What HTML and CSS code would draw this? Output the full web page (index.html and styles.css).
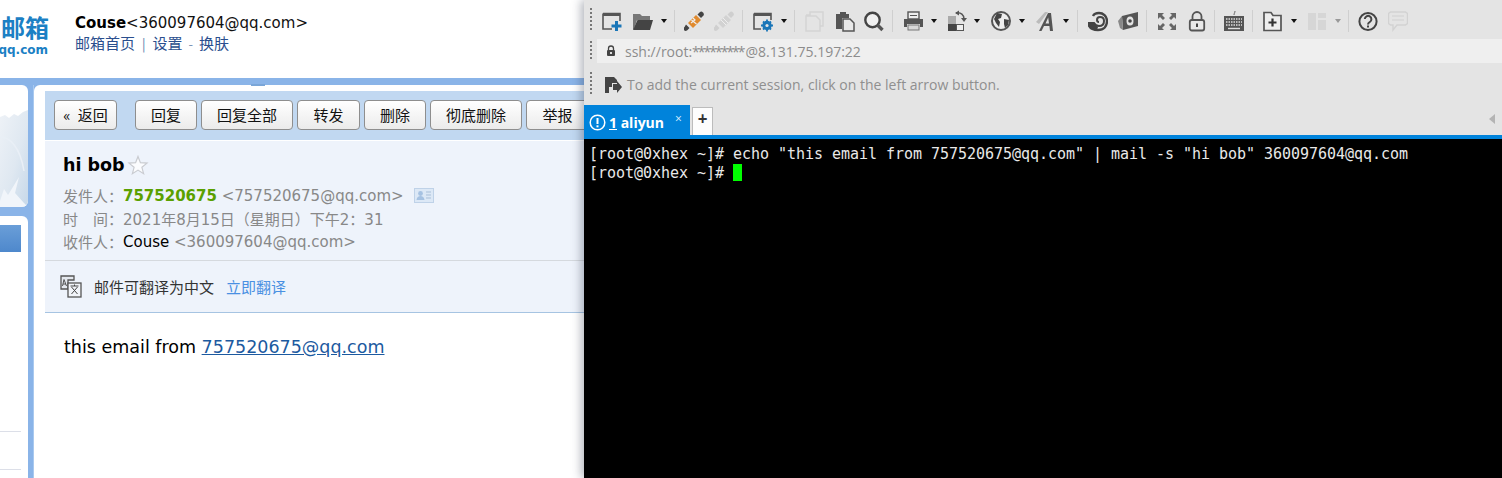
FILE: index.html
```html
<!DOCTYPE html>
<html lang="zh-CN">
<head>
<meta charset="utf-8">
<title>QQ邮箱 + Xshell</title>
<link rel="stylesheet" href="styles.css">
</head>
<body>
<div class="app">
  <section class="mail">
    <header class="mail-top">
      <div class="logo">
        <div class="logo-cn">邮箱</div>
        <div class="logo-en">qq.com</div>
      </div>
      <div class="user">
        <div class="user-name"><b>Couse</b>&lt;360097604@qq.com&gt;</div>
        <div class="user-links"><a>邮箱首页</a><span class="pipe">|</span><a>设置</a><span class="dash">-</span><a>换肤</a></div>
      </div>
    </header>
    <div class="mail-frame">
      <span class="notch"></span>
      <aside class="side">
        <div class="side-art">
          <svg width="28" height="122" viewBox="0 0 28 122">
            <defs>
              <linearGradient id="art" x1="0" y1="0" x2="1" y2="1"><stop offset="0" stop-color="#eef2f7"/><stop offset=".55" stop-color="#dfe8f1"/><stop offset="1" stop-color="#c6d8e9"/></linearGradient>
            </defs>
            <path d="M0 32 L5 30 L9 33 L14 29 L18 31 L23 27 L28 25 V122 H0Z" fill="url(#art)"/>
            <path d="M0 52 C10 52 20 62 24 86" fill="none" stroke="#e9eff6" stroke-width="1.500"/>
            <path d="M0 116 L4 104 L8 110 L19 92 L15 108 L24 118 L28 122 H0Z" fill="#f1f5fa"/>
          </svg>
        </div>
        <div class="side-list">
          <div class="side-sel"></div>
          <div class="side-rule side-rule-a"></div>
          <div class="side-rule side-rule-b"></div>
        </div>
      </aside>
      <div class="gutter"></div>
      <main class="read">
        <div class="btnbar">
          <button class="btn btn-back">« 返回</button>
          <span class="btn-sep"></span>
          <button class="btn btn-n">回复</button>
          <button class="btn btn-4">回复全部</button>
          <button class="btn btn-2">转发</button>
          <button class="btn btn-n">删除</button>
          <button class="btn btn-4">彻底删除</button>
          <button class="btn btn-2">举报</button>
        </div>
        <div class="head">
          <h1 class="subject">hi bob<svg class="star" width="22" height="22" viewBox="0 0 22 22"><path d="M11 2.500l2.400 6.200 6.600.4-5.100 4.200 1.700 6.400L11 16.100l-5.600 3.600 1.700-6.400L2 9.100l6.600-.4z" fill="#fbfcfe" stroke="#c9cbd0" stroke-width="1.200"/></svg></h1>
          <div class="meta"><span class="k">发件人：</span><b class="from">757520675</b> &lt;757520675@qq.com&gt;<svg class="card" width="20" height="15" viewBox="0 0 20 15"><rect x=".5" y=".5" width="19" height="14" fill="#dce8f6" stroke="#bfd2e8"/><circle cx="6.500" cy="5.500" r="2.400" fill="#a6c2e2"/><path d="M2.500 12c.4-3 2-4 4-4s3.600 1 4 4z" fill="#a6c2e2"/><path d="M12 4h5M12 7h5M12 10h5" stroke="#a9bfd8"/></svg></div>
          <div class="meta"><span class="k">时<i class="sp"></i>间：</span>2021年8月15日（星期日）下午2：31</div>
          <div class="meta"><span class="k">收件人：</span><span class="to">Couse</span> &lt;360097604@qq.com&gt;</div>
        </div>
        <div class="translate">
          <svg width="22" height="23" viewBox="0 0 22 23"><path d="M1 1h13v4H8v9H1z" fill="#e4e8ee" stroke="#555" stroke-width="1.300"/><rect x="8" y="8" width="13" height="14" fill="#f2f5fa" stroke="#555" stroke-width="1.300"/><path d="M4 4.500L2.500 11M4 4.500L6.500 11M3 9h3" stroke="#555" fill="none"/><path d="M10.500 11h8M14.500 9.500V11M11.500 12l6 7M17.500 12l-6 7" stroke="#444" fill="none"/></svg>
          <span class="tr-text">邮件可翻译为中文</span>
          <a class="tr-link">立即翻译</a>
        </div>
        <div class="body-text">this email from <a>757520675@qq.com</a></div>
      </main>
    </div>
  </section>

  <section class="term">
    <div class="tools">
      <span class="grip"></span>
      <svg class="ic" viewBox="0 0 20 22"><path d="M1 3.500h17V11M10 19H1V3.500" fill="none" stroke="#555" stroke-width="1.600"/><rect x="1" y="3" width="17" height="3" fill="#555"/><path d="M14.500 11v10M9.500 16h10" stroke="#1a76b8" stroke-width="3"/></svg>
      <svg class="ic m11" viewBox="0 0 20 22"><path d="M0 4h7l2 2h8v4H4L1 19H0z" fill="#777"/><path d="M4.500 10H20l-3 10H0z" fill="#444"/></svg>
      <i class="caret"></i><i class="sep"></i>
      <svg class="ic m9" viewBox="0 0 20 22"><path d="M13.500 4.500L16 2q1.500-1 3 .5t.5 3L17 8z" fill="#444"/><path d="M2 14.500l3.500 3.500-2.500 2.500q-2 1-3-.5t.5-3z" fill="#444"/><path d="M12 5l5 5-8 8-5-5z" fill="#e08a2e"/><path d="M7.500 10l5 4M9 8l2 2-4 3" stroke="#eee" stroke-width="1.200" fill="none"/></svg>
      <svg class="ic" viewBox="0 0 20 22"><path d="M13.500 4.500L16 2q1.500-1 3 .5t.5 3L17 8zM2 14.500l3.500 3.500-2.500 2.500q-2 1-3-.5t.5-3z" fill="#cfcfcf"/><path d="M12 5l5 5-8 8-5-5z" fill="#d2d2d2"/><path d="M9 8l5 5M7 10l5 5" stroke="#eee"/></svg>
      <i class="sep"></i>
      <svg class="ic" viewBox="0 0 20 22"><path d="M1 3.500h17V10M8 19H1V3.500" fill="none" stroke="#555" stroke-width="1.600"/><rect x="1" y="3" width="17" height="3" fill="#555"/><circle cx="14" cy="15.500" r="3.500" fill="none" stroke="#1a76b8" stroke-width="2.400"/><path d="M14 9.500v12M8 15.500h12M10 11.500l8 8M18 11.500l-8 8" stroke="#1a76b8" stroke-width="1.800"/><circle cx="14" cy="15.500" r="1.600" fill="#e4e4e4"/></svg>
      <i class="caret"></i><i class="sep"></i>
      <svg class="ic" viewBox="0 0 20 22"><path d="M1 5h4V2h8l5 0v14h-5" fill="none" stroke="#d4d4d4" stroke-width="1.500"/><path d="M1 6h10l4 4v11H1z" fill="#e4e4e4" stroke="#d4d4d4" stroke-width="1.500"/></svg>
      <svg class="ic" viewBox="0 0 20 22"><path d="M1 4h4V2h6v2h3v4H7v11H1z" fill="#555"/><path d="M8 9h7l4 4v8H8z" fill="#e9e9e9" stroke="#555" stroke-width="1.500"/></svg>
      <svg class="ic m9" viewBox="0 0 20 22"><circle cx="8.500" cy="10" r="7.200" fill="#f0f0f0" stroke="#444" stroke-width="2.400"/><path d="M13.500 15l5 5" stroke="#555" stroke-width="3.400"/></svg>
      <i class="sep"></i>
      <svg class="ic" viewBox="0 0 20 22"><rect x="5" y="2" width="11" height="7" fill="#eee" stroke="#555" stroke-width="1.400"/><path d="M1 9h19v8h-3v-3H4v3H1z" fill="#555"/><rect x="5" y="15" width="11" height="5" fill="#d8d8d8" stroke="#777"/><path d="M7 5.500h7" stroke="#555"/></svg>
      <i class="caret"></i>
      <svg class="ic m11" viewBox="0 0 20 22"><rect x="1" y="6" width="8" height="8" fill="#aaa"/><rect x="1" y="14" width="8" height="7" fill="#444"/><rect x="9.500" y="14.500" width="7" height="6" fill="#eee" stroke="#555"/><path d="M9 3c5-1 8 2 8 6" fill="none" stroke="#555" stroke-width="1.500"/><path d="M12 .5L8 3l4 2.500zM14 8h6l-3 4z" fill="#555"/></svg>
      <i class="caret m7"></i>
      <svg class="ic m12" viewBox="0 0 20 22"><circle cx="10" cy="11" r="9" fill="#eee" stroke="#555" stroke-width="2"/><path d="M6 3l5 1-1 4-3 1 2 3-1 5-3-4-2-4zM13 9l5 1-1 5-3 3-1-4z" fill="#444"/></svg>
      <i class="caret"></i>
      <svg class="ic m12" viewBox="0 0 20 22"><path d="M0 12L9 2h3L3 14z" fill="#bbb"/><path d="M3 21L12 3h3l2 18h-3l-.6-5H8l-2.500 5zM9.500 13.500h3.500l-.8-6z" fill="#555"/></svg>
      <i class="caret m7"></i><i class="sep m9"></i>
      <svg class="ic" viewBox="0 0 20 22"><path d="M0 13h6c1 2 3 3 5 3 3 0 5-2 5-5s-2-4-4-4-3 1-3 3 1 2 2 2" fill="none" stroke="#444" stroke-width="2"/><path d="M0 13c1 5 5 7 10 7 6 0 9-4 9-9 0-5-4-8-8-8-3 0-5 1-6 3" fill="none" stroke="#444" stroke-width="2.400"/><path d="M0 13h6l4 4-1 3q-7-1-9-7z" fill="#444"/></svg>
      <svg class="ic" viewBox="0 0 20 22"><path d="M4 6l16-4v14L5 20z" fill="#555"/><path d="M0 11l4-5 1 14-3-2z" fill="#888"/><ellipse cx="12" cy="11" rx="3.500" ry="4.500" fill="#e4e4e4"/><circle cx="12" cy="11" r="1.800" fill="#444"/></svg>
      <i class="sep"></i>
      <svg class="ic" viewBox="0 0 20 22"><path d="M1 3h6L5 5l3 3-2 2-3-3-2 2zM19 3h-6l2 2-3 3 2 2 3-3 2 2zM1 20h6l-2-2 3-3-2-2-3 3-2-2zM19 20h-6l2-2-3-3 2-2 3 3 2-2z" fill="#666"/></svg>
      <svg class="ic" viewBox="0 0 20 22"><path d="M5.500 10V6.500a4.500 4.500 0 0 1 9 0V10" fill="none" stroke="#555" stroke-width="1.800"/><rect x="2.800" y="10" width="14.400" height="10.500" rx="2" fill="#e9e9e9" stroke="#555" stroke-width="1.800"/><rect x="9" y="13.500" width="2" height="3.500" fill="#444"/></svg>
      <i class="sep m7"></i>
      <svg class="ic m9" viewBox="0 0 20 22"><path d="M10 5c0-2 1-2 1-4" fill="none" stroke="#666"/><rect x="0" y="6" width="20" height="15" fill="#555"/><path d="M2 9h16M2 12h16M2 15h16" stroke="#ddd" stroke-width="1.400" stroke-dasharray="1.500 1"/><path d="M4 18.500h12" stroke="#ddd" stroke-width="1.400"/></svg>
      <i class="sep"></i>
      <svg class="ic" viewBox="0 0 20 22"><path d="M1 2.500h7l2 3h8v15H1z" fill="#eee" stroke="#555" stroke-width="1.700"/><path d="M9.500 8.500v8M5.500 12.500h8" stroke="#333" stroke-width="2.200"/></svg>
      <i class="caret"></i>
      <svg class="ic m11" viewBox="0 0 20 22"><path d="M1 3h8v17H1zM11 3h8v5h-8zM11 10h8v10h-8z" fill="#d6d6d6"/></svg>
      <i class="caret caret-off"></i><i class="sep"></i>
      <svg class="ic m9" viewBox="0 0 20 22"><circle cx="10" cy="11.500" r="8.600" fill="none" stroke="#444" stroke-width="2"/><path d="M6.800 9a3.300 3.300 0 1 1 5 3c-1.200.8-1.800 1.300-1.800 2.500" fill="none" stroke="#444" stroke-width="2"/><rect x="9" y="15.500" width="2" height="2" fill="#444"/></svg>
      <svg class="ic" viewBox="0 0 20 22"><path d="M2.500 2h15l2 1.500v10L17.500 15H9l-4 5v-5H2.500L.5 13.500v-10z" fill="none" stroke="#d2d2d2" stroke-width="1.400"/><path d="M4 6h12M4 10h12" stroke="#d6d6d6" stroke-width="1.300"/></svg>
    </div>
    <div class="addr">
      <span class="grip grip-s"></span>
      <div class="addr-box">
        <svg width="10" height="12" viewBox="0 0 10 12"><path d="M2.500 5.500V3.500a2.500 2.500 0 0 1 5 0v2" fill="none" stroke="#444" stroke-width="1.300"/><rect x="1" y="5" width="8" height="6" rx="1" fill="#444"/><rect x="4" y="7" width="2" height="2" fill="#ddd"/></svg>
        <span>ssh://root:<span class="stars">*********</span>@8.131.75.197:22</span>
      </div>
    </div>
    <div class="hint">
      <span class="grip grip-m"></span>
      <svg width="18" height="18" viewBox="0 0 18 18"><path d="M1 1h9l3 3v3H8v4H5v6H1z" fill="#444"/><path d="M9 8h4V5l5 6-5 6v-3H9z" fill="#444"/></svg>
      <span>To add the current session, click on the left arrow button.</span>
    </div>
    <div class="tabs">
      <div class="tab">
        <svg width="17" height="17" viewBox="0 0 17 17"><circle cx="8.500" cy="8.500" r="7.300" fill="none" stroke="#fff" stroke-width="1.500"/><path d="M8.500 4v6" stroke="#fff" stroke-width="2"/><rect x="7.500" y="11.300" width="2" height="2" fill="#fff"/></svg>
        <span class="tab-name"><u>1</u> aliyun</span>
        <span class="tab-x">×</span>
      </div>
      <div class="tab-add">+</div>
      <i class="tab-scroll"></i>
    </div>
    <div class="blue-line"></div>
    <pre class="console">[root@0xhex ~]# echo "this email from 757520675@qq.com" | mail -s "hi bob" 360097604@qq.com
[root@0xhex ~]# <span class="cursor"> </span></pre>
  </section>
</div>
</body>
</html>
```
FILE: styles.css
```css
* { box-sizing: border-box; }
html, body { margin: 0; padding: 0; height: 478px; overflow: hidden; background: #fff; }
body { font-family: "DejaVu Sans", "Noto Sans CJK SC", sans-serif; }
.app { display: flex; height: 478px; }

/* mail */
.mail { width: 584px; flex: none; overflow: hidden; display: flex; flex-direction: column; font-size: 15px; }
.mail-top { height: 78px; flex: none; display: flex; background: #fff; }
.logo { width: 49px; margin-right: 26px; padding-top: 12px; display: flex; flex-direction: column; align-items: flex-end; color: #1b80c4; }
.logo-cn { font: 700 24px/30px "Noto Sans CJK SC", sans-serif; white-space: nowrap; }
.logo-en { font: 700 12px/15px "DejaVu Sans", sans-serif; white-space: nowrap; margin-top: 1px; margin-right: 1px; flex: none; }
.user { padding-top: 14px; }
.user-name { font-size: 15px; line-height: 19px; color: #111; white-space: nowrap; }
.user-name b { color: #000; }
.user-links { font-size: 15px; line-height: 20px; color: #2b4f8e; white-space: nowrap; font-family: "Noto Sans CJK SC", sans-serif; }
.pipe { margin: 0 7px; color: #5a7ca8; font-size: 13px; }
.dash { margin: 0 6px; color: #7d93b5; font-size: 13px; }

.mail-frame { flex: 1; position: relative; display: flex; padding-top: 7px; background: #8ab4e8; min-height: 0; }
.notch { position: absolute; left: 251px; top: 6px; width: 14px; height: 2px; background: #7aa6d8; }
.side { width: 28px; flex: none; display: flex; flex-direction: column; }
.side-art { height: 122px; background: #fff; border-radius: 0 6px 6px 0; overflow: hidden; flex: none; }
.side-art svg { display: block; }
.side-list { margin-top: 9px; flex: 1; background: #fff; border-radius: 0 6px 0 0; padding: 9px 7px 0 0; }
.side-sel { height: 27px; background: linear-gradient(#6a9ed8, #4e88cc); }
.side-rule { height: 1px; background: #dcdfe8; }
.side-rule-a { margin-top: 179px; }
.side-rule-b { margin-top: 37px; }
.gutter { width: 6px; flex: none; background: linear-gradient(90deg, #8ab4e8 0 5px, #a9c9ef 5px); }
.read { flex: 1; min-width: 0; background: #fff; border-radius: 6px 0 0 0; padding: 6px 0 0 11px; }

.btnbar { height: 50px; display: flex; align-items: flex-start; gap: 4px; padding: 9px 0 0 9px; background: #c1d8f1; border-bottom: 1px solid #fff; white-space: nowrap; }
.btn { height: 30px; flex: none; padding: 0; border: 1px solid #8e8e8e; border-radius: 4px; background: linear-gradient(#fff, #ebebeb); color: #111; font: 15px/28px "Noto Sans CJK SC", sans-serif; }
.btn-back { width: 63px; word-spacing: 4px; }
.btn-n { width: 62px; }
.btn-2 { width: 63px; }
.btn-4 { width: 92px; }
.btn-sep { width: 1px; height: 26px; margin: 2px 5px 0 5px; background: #e8f0fa; box-shadow: 1px 0 0 #a9c2dd; }

.head { height: 120px; padding: 12px 0 0 18px; background: #eef3fb; border-bottom: 1px solid #d5d9de; }
.subject { margin: 0 0 7px; height: 24px; display: flex; align-items: center; font: 700 17.500px/24px "DejaVu Sans", sans-serif; color: #000; }
.star { margin-left: 2px; }
.meta { display: flex; align-items: center; height: 23px; font-size: 15px; color: #888; white-space: pre; }
.k { width: 60px; font: 15px "Noto Sans CJK SC", sans-serif; color: #888; flex: none; }
.sp { display: inline-block; width: 15px; }
.from { color: #5aa000; }
.to { color: #000; }
.card { margin-left: 10px; }
.translate { height: 52px; display: flex; align-items: center; padding-left: 15px; background: #eef3fb; border-bottom: 1px solid #a6c4e2; font: 15px "Noto Sans CJK SC", sans-serif; }
.tr-text { margin-left: 12px; color: #333; }
.tr-link { margin-left: 12px; color: #4a90e2; }
.body-text { padding: 22px 0 0 19px; font-size: 17.500px; line-height: 24px; color: #000; }
.body-text a { color: #1c5aa0; text-decoration: underline; }

/* terminal */
.term { flex: 1; min-width: 0; position: relative; display: flex; flex-direction: column; background: #e4e4e4; box-shadow: -3px 0 9px rgba(40, 50, 70, .35); font-family: "Open Sans", sans-serif; }
.tools { height: 39px; flex: none; display: flex; align-items: center; padding: 2px 0 0 6px; }
.ic { width: 20px; height: 22px; flex: none; margin-left: 10px; filter: blur(.35px); }
.caret { width: 0; height: 0; flex: none; margin-left: 8px; border: 3.500px solid transparent; border-top: 4px solid #111; border-bottom: 0; margin-right: -1px; }
.caret-off { border-top-color: #999; }
.sep { width: 1px; height: 22px; flex: none; margin-left: 8px; background: #cfcfcf; }
.m7 { margin-left: 7px; }
.m9 { margin-left: 9px; }
.m11 { margin-left: 11px; }
.m12 { margin-left: 12px; }
.grip { width: 2px; height: 22px; flex: none; margin-top: -3px; background: repeating-linear-gradient(#777 0 2px, transparent 2px 4px); }
.addr { height: 24px; flex: none; display: flex; align-items: center; padding-left: 6px; }
.grip-s { height: 20px; margin-top: 0; }
.addr-box { margin-left: 5px; flex: 1; height: 24px; display: flex; align-items: center; gap: 9px; padding-left: 9px; background: #efefef; color: #8c8c8c; font-size: 14px; }
.stars { letter-spacing: -2px; margin-right: 2px; }
.hint { height: 42px; flex: none; display: flex; align-items: center; padding: 0 0 0 6px; color: #8f8f8f; font-size: 14px; }
.grip-m { height: 22px; }
.hint svg { margin: 2px 5px 0 12px; }
.tabs { height: 30px; flex: none; display: flex; align-items: flex-end; position: relative; }
.tab { width: 106px; height: 30px; display: flex; align-items: center; padding: 4px 0 0 5px; background: #0083db; color: #fff; font-size: 14px; font-weight: 700; }
.tab-name { margin-left: 3px; }
.tab-x { margin-left: 11px; font-size: 12px; font-weight: 400; margin-top: -7px; color: #dcefff; }
.tab-add { width: 21px; height: 28px; margin-left: 2px; background: #fdfdfd; border: 1px solid #bcbcbc; border-bottom: 0; color: #333; font: 700 17px/22px "Open Sans", sans-serif; text-align: center; }
.tab-scroll { position: absolute; right: 7px; top: 9px; width: 0; height: 0; border: 5px solid transparent; border-left: 0; border-right: 6px solid #b4b4b4; }
.blue-line { height: 4px; flex: none; background: #0083db; }
.console { flex: 1; margin: 0; padding: 6px 0 0 5px; background: #000; color: #e8e8e8; font: 15px/19px "DejaVu Sans Mono", monospace; letter-spacing: -.03px; overflow: hidden; }
.cursor { display: inline-block; width: 9px; height: 17px; vertical-align: 0; background: #00ff00; }
```
